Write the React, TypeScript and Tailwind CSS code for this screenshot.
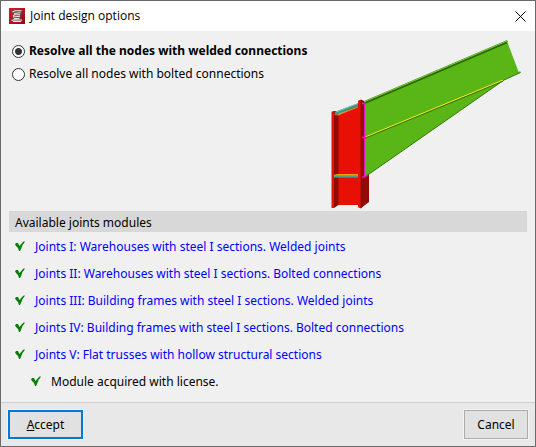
import { useState } from "react";

const modules = [
  "Joints I: Warehouses with steel I sections. Welded joints",
  "Joints II: Warehouses with steel I sections. Bolted connections",
  "Joints III: Building frames with steel I sections. Welded joints",
  "Joints IV: Building frames with steel I sections. Bolted connections",
  "Joints V: Flat trusses with hollow structural sections",
];

function AppIcon() {
  return (
    <svg viewBox="0 0 16 16" className="size-4 shrink-0" aria-hidden="true">
      <defs>
        <linearGradient id="badge" x1="0" y1="0" x2="1" y2="1">
          <stop offset="0" stopColor="#d0202c" />
          <stop offset="1" stopColor="#8c0c18" />
        </linearGradient>
      </defs>
      <rect width="16" height="16" fill="url(#badge)" />
      <path d="M3 3L5 2H13V4L12 5V8L11 9V11L14 12V13L12 14H3L2 12L4 10V8L5 6L3 5z" fill="#6b4a4e" />
      <path
        d="M3.500 4L6 2.800H12.500M5 5.500L11.500 4.800M4 8L5.500 6.800H11M4 9L11 8.200M5 10.800L10.500 10.200M2.500 12.500L5 11.800L13 12M4 13.500H12"
        stroke="#ece4e4"
        strokeWidth="1.100"
        fill="none"
      />
    </svg>
  );
}

function Check() {
  return (
    <svg viewBox="0 0 10 12" className="h-3 w-[10px] shrink-0" aria-hidden="true">
      <path d="M1 2H3L4.500 5L8 1L9.500 0V1.500L7.500 4L6 8L5 10H4L3 7L1 5L0 3.500z" fill="#008000" />
    </svg>
  );
}

function JointPicture() {
  return (
    <svg
      viewBox="330 36 194 174"
      className="h-[174px] w-[194px] shrink-0"
      role="img"
      aria-label="Welded joint between a column and a tapered beam"
    >
      <path d="M361 178L369 173V202L361 208z" fill="#920a04" />
      <path d="M338 115L359 105V205H338z" fill="#e81005" />
      <path d="M331.500 112L333 111H338V115H334V208H331.500z" fill="#e81005" />
      <path d="M334 113H338.500V205L334 208z" fill="#920a04" />
      <path d="M333 112L336 111V113H333z" fill="#b30c04" />
      <path d="M334.500 114.500L338 115L359 106.500" stroke="#f08a08" strokeWidth="1.200" fill="none" />
      <path d="M335 113.500L359 104.500" stroke="#3f9480" strokeWidth="3" />
      <path d="M336 112L358 103.500" stroke="#7cc8b0" strokeWidth="1" />
      <path d="M334 175.500L337 174.500H359" stroke="#f0a008" strokeWidth="1.200" fill="none" />
      <path d="M334 176.500H359" stroke="#3f9480" strokeWidth="2.500" />
      <path d="M334 175.800H359" stroke="#7cc8b0" strokeWidth="0.800" />
      <path d="M358 101L361 99.500L364 101V205L361 208.500L358 207z" fill="#920a04" />
      <path d="M358 101L360.500 100V208L358 207z" fill="#e81005" />
      <path d="M364 102L507 41L519 73L504 80L369 174L364 177z" fill="#5ab616" />
      <path d="M364 103.500L507 42.500" stroke="#2c660a" strokeWidth="1.500" />
      <path d="M364 101.500L507 40.500L507.500 42" stroke="#58b018" strokeWidth="1" fill="none" />
      <path d="M520.500 72.500L504 80L367 175.500" stroke="#2f7a0b" strokeWidth="1" fill="none" />
      <path d="M517 73.500L520.500 72" stroke="#46a012" strokeWidth="1.500" />
      <path d="M365 137.500L503 80.500" stroke="#306d0b" strokeWidth="2" />
      <path d="M365 137L503 80" stroke="#f0f018" strokeWidth="1.300" />
      <path d="M364.500 103V176M362 103.500H366M362 137.500H367M362 177H364.500L368 175" stroke="#e810c8" strokeWidth="1.300" fill="none" />
    </svg>
  );
}

const radioClass =
  "size-[13px] shrink-0 appearance-none rounded-full border border-[#333] bg-white checked:bg-[radial-gradient(circle,#333_3px,#fff_4px)]";
const buttonClass =
  "h-[29px] bg-[#e1e1e1] outline outline-1 outline-[#f3f3f3]";

export default function App() {
  const [mode, setMode] = useState("welded");
  return (
    <main className="flex min-h-screen flex-col border border-[#6b696b] bg-[#f0f0f0] font-['Noto_Sans',sans-serif] text-[12px] leading-[18px] text-black">
      <header className="flex h-[30px] items-center bg-white pr-[9px] pl-2">
        <AppIcon />
        <h1 className="ml-[5px] grow font-['Open_Sans',sans-serif]">Joint design options</h1>
        <button type="button" aria-label="Close">
          <svg viewBox="0 0 11 11" className="size-[11px]" aria-hidden="true">
            <path d="M.5.5l10 10M10.500.5l-10 10" stroke="#000" strokeWidth="1" />
          </svg>
        </button>
      </header>

      <section className="flex h-[180px] items-start justify-between pt-[5px] pr-[11px] pl-[11px]">
        <fieldset className="flex flex-col gap-[5px] pt-[6px]">
          <label className="flex items-center gap-1 font-bold whitespace-nowrap">
            <input type="radio" name="mode" className={radioClass} checked={mode === "welded"} onChange={() => setMode("welded")} />
            Resolve all the nodes with welded connections
          </label>
          <label className="flex items-center gap-1 whitespace-nowrap">
            <input type="radio" name="mode" className={radioClass} checked={mode === "bolted"} onChange={() => setMode("bolted")} />
            Resolve all nodes with bolted connections
          </label>
        </fieldset>
        <JointPicture />
      </section>

      <section className="grow px-2">
        <h2 className="h-[21px] bg-[#d8d8d8] px-[6px] leading-[24px]">Available joints modules</h2>
        <ul className="pt-px pl-[6px]">
          {modules.map((name) => (
            <li key={name} className="flex h-[27px] items-center gap-[10px]">
              <Check />
              <a href="#" className="text-[#0000ff]">{name}</a>
            </li>
          ))}
          <li className="flex h-[27px] items-center gap-[10px] pl-4">
            <Check />
            Module acquired with license.
          </li>
        </ul>
      </section>

      <footer className="flex h-11 items-start justify-between border-t border-[#d0d0d0] bg-[#e8e8e8] px-[7px] pt-[7px]">
        <button type="button" className={buttonClass + " w-[75px] border-2 border-[#0078d7]"}>
          <span className="underline">A</span>ccept
        </button>
        <button type="button" className={buttonClass + " w-16 border border-[#adadad]"}>Cancel</button>
      </footer>
    </main>
  );
}
